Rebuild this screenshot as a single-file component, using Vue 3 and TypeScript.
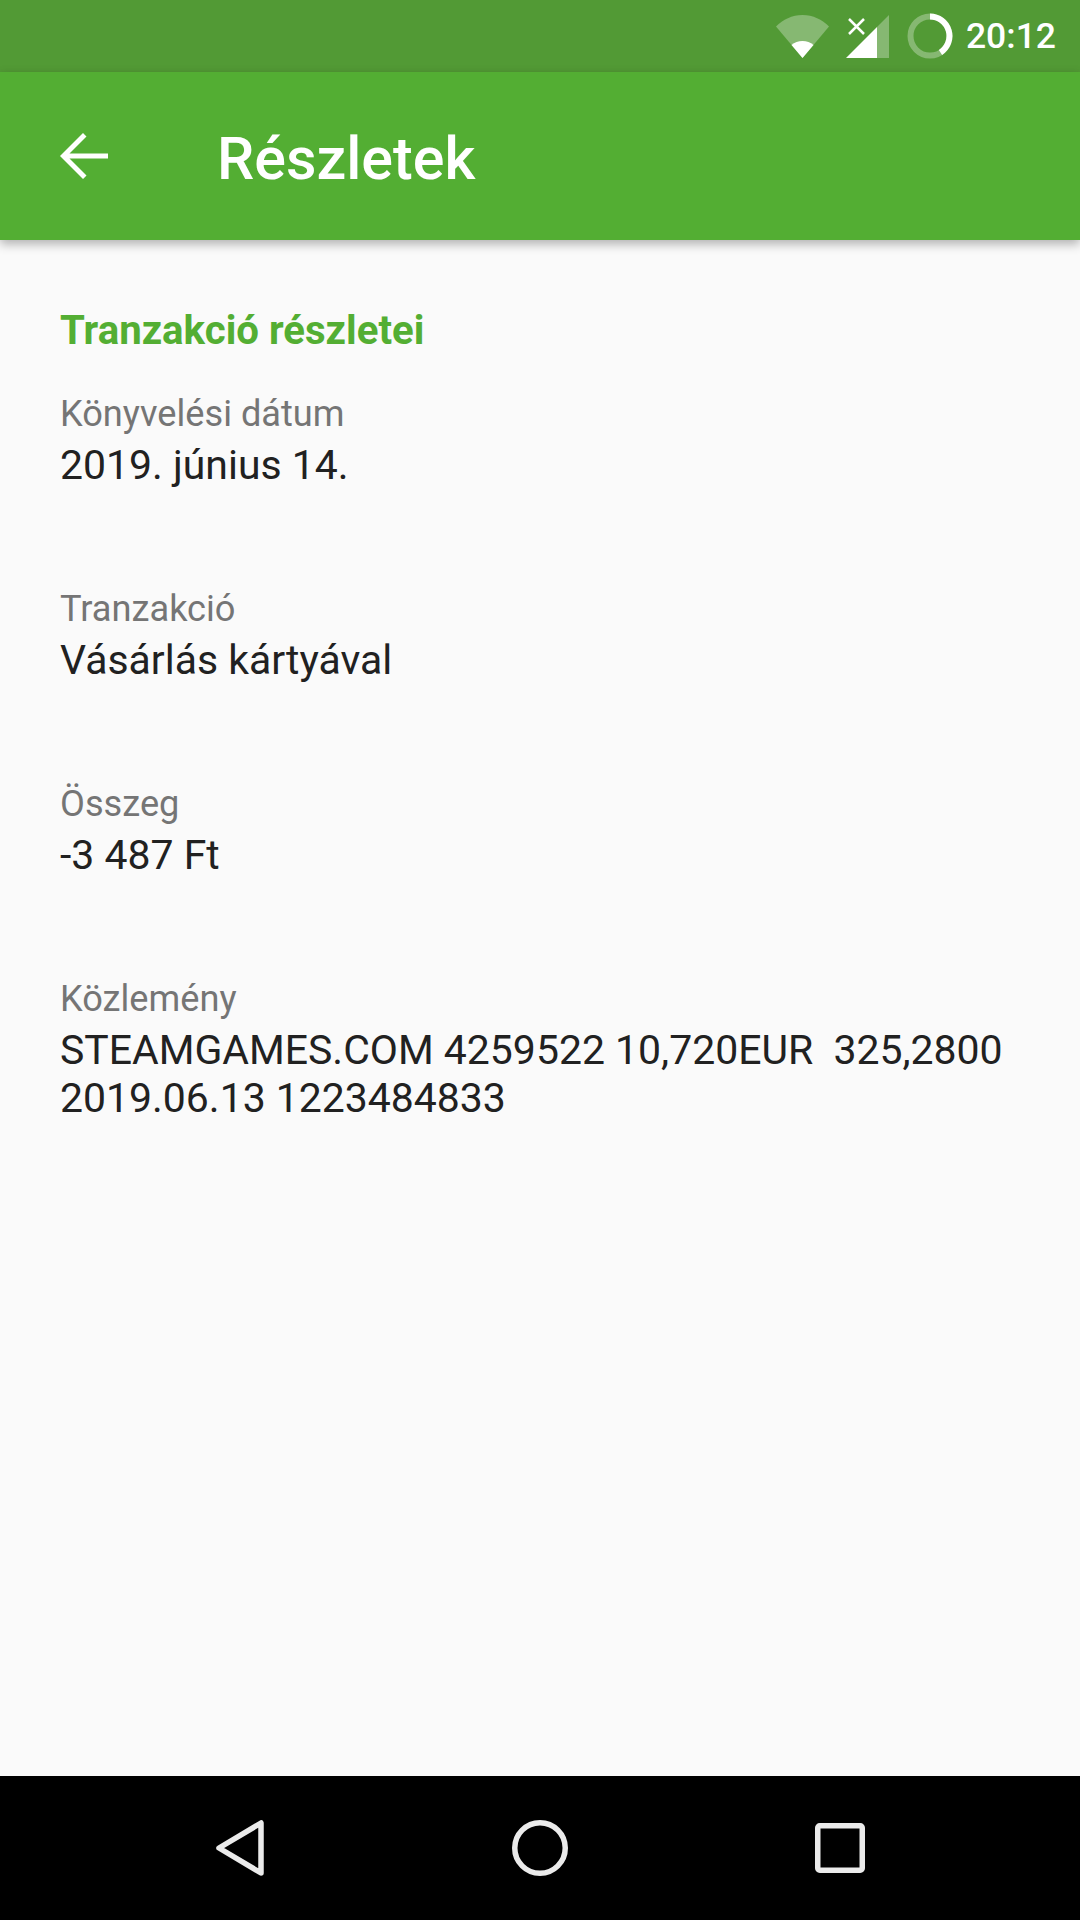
<script setup lang="ts">
interface Row { label: string; lines: string[] }
const rows: Row[] = [
  { label: 'Könyvelési dátum', lines: ['2019. június 14.'] },
  { label: 'Tranzakció', lines: ['Vásárlás kártyával'] },
  { label: 'Összeg', lines: ['-3 487 Ft'] },
  { label: 'Közlemény', lines: ['STEAMGAMES.COM 4259522 10,720EUR  325,2800', '2019.06.13 1223484833'] },
]
</script>

<template>
  <div class="screen">
    <div class="status">
      <svg class="wifi" width="53" height="43" viewBox="0 0 53 43">
        <path d="M0 11.5C7 4.5 16 0 26.5 0S46 4.500 53 11.500L26.500 43Z" fill="#fff" fill-opacity=".3" />
        <path d="M15.500 29.900C18.500 27.500 22.300 26 26.500 26S34.500 27.500 37.500 29.900L26.500 43Z" fill="#fff" />
      </svg>
      <svg class="signal" width="43" height="43" viewBox="0 0 43 43">
        <path d="M31 12L43 0V43H31Z" fill="#fff" fill-opacity=".3" />
        <path d="M0 43L31 12V43Z" fill="#fff" />
        <path d="M3 4L18 19M18 4L3 19" stroke="#fff" stroke-width="2.500" fill="none" />
      </svg>
      <svg class="ring" width="46" height="46" viewBox="0 0 46 46">
        <circle cx="23" cy="23" r="19.500" fill="none" stroke="#fff" stroke-opacity=".3" stroke-width="6" />
        <path d="M23 3.500A19.500 19.500 0 0 1 33.500 39.400" fill="none" stroke="#fff" stroke-width="6" />
      </svg>
      <span class="time">20:12</span>
    </div>
    <header class="bar">
      <svg class="back" width="48" height="48" viewBox="0 0 48 48">
        <path d="M48 21.500H9.500L26.500 4.500L23 1L0 24L23 47L26.500 43.500L9.500 26.500H48Z" fill="#fff" />
      </svg>
      <h1 class="title">Részletek</h1>
    </header>
    <main class="body">
      <h2 class="section">Tranzakció részletei</h2>
      <div v-for="row in rows" :key="row.label" class="row">
        <div class="label">{{ row.label }}</div>
        <div v-for="line in row.lines" :key="line" class="value">{{ line }}</div>
      </div>
    </main>
    <nav class="nav">
      <svg width="48" height="56" viewBox="0 0 48 56">
        <path d="M45 3V53L3 28Z" fill="none" stroke="#ebebeb" stroke-width="5.500" stroke-linejoin="round" />
      </svg>
      <svg width="56" height="56" viewBox="0 0 56 56">
        <circle cx="28" cy="28" r="25.250" fill="none" stroke="#ebebeb" stroke-width="5.500" />
      </svg>
      <svg width="50" height="50" viewBox="0 0 50 50">
        <rect x="2.750" y="2.750" width="44.500" height="44.500" rx="2" fill="none" stroke="#ebebeb" stroke-width="5.500" />
      </svg>
    </nav>
  </div>
</template>

<style>
html, body { margin: 0; padding: 0; }
</style>

<style scoped>
.screen {
  width: 1080px;
  height: 1920px;
  display: flex;
  flex-direction: column;
  background: #fafafa;
  font-family: Roboto, "Liberation Sans", sans-serif;
  overflow: hidden;
}
.status {
  height: 72px;
  flex: none;
  background: #529a35;
  display: flex;
  align-items: center;
  justify-content: flex-end;
  padding-right: 24px;
  box-sizing: border-box;
  color: #fff;
}
.wifi { margin-right: 17px; }
.signal { margin-right: 18px; }
.ring { margin-right: 13px; }
.time { font-size: 35.500px; font-weight: 500; line-height: 72px; }
.bar {
  height: 168px;
  flex: none;
  background: #53ae33;
  display: flex;
  align-items: center;
  padding-left: 60px;
  box-shadow: 0 4px 10px rgba(0, 0, 0, .3);
  position: relative;
}
.back { margin-right: 109px; }
.title {
  margin: 5px 0 0;
  font-size: 59.200px;
  line-height: 72px;
  font-weight: 500;
  color: #fff;
}
.body { flex: 1; padding: 67px 60px 0; }
.section {
  margin: 0 0 31px;
  font-size: 40.200px;
  line-height: 48px;
  font-weight: 700;
  color: #53ae33;
}
.row { margin-bottom: 92px; }
.label {
  font-size: 36.200px;
  line-height: 55px;
  color: #757575;
}
.value {
  font-size: 40.950px;
  line-height: 48px;
  color: #212121;
  white-space: pre;
}
.nav {
  height: 144px;
  flex: none;
  background: #000;
  display: flex;
  align-items: center;
  justify-content: space-between;
  padding: 0 215px 0 216px;
}
</style>
